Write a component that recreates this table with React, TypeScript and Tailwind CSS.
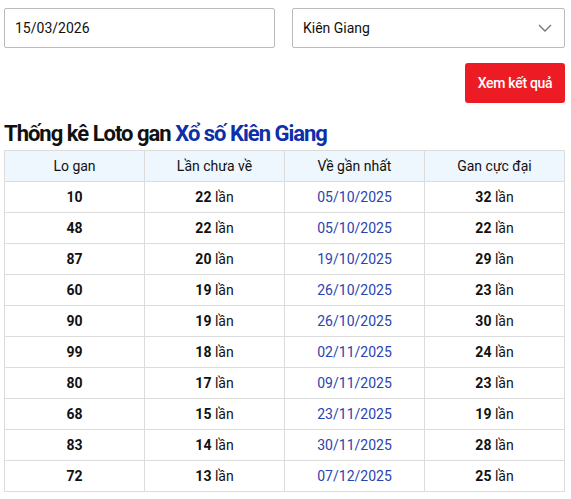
import React from 'react'

function App() {
    const rows = [
        { so: "10", chua: 22, ngay: "05/10/2025", max: 32 },
        { so: "48", chua: 22, ngay: "05/10/2025", max: 22 },
        { so: "87", chua: 20, ngay: "19/10/2025", max: 29 },
        { so: "60", chua: 19, ngay: "26/10/2025", max: 23 },
        { so: "90", chua: 19, ngay: "26/10/2025", max: 30 },
        { so: "99", chua: 18, ngay: "02/11/2025", max: 24 },
        { so: "80", chua: 17, ngay: "09/11/2025", max: 23 },
        { so: "68", chua: 15, ngay: "23/11/2025", max: 19 },
        { so: "83", chua: 14, ngay: "30/11/2025", max: 28 },
        { so: "72", chua: 13, ngay: "07/12/2025", max: 25 }
    ];

    return (
        <div className="bg-white pl-[4px] pr-[6px] pt-[8px] font-['Roboto',sans-serif] text-[#111] w-[571px] h-[499px]">
            {/* Form */}
            <div className="flex gap-[17px]">
                <div className="flex-1 h-[40px] border border-[#bbb] rounded-[2px] flex items-center px-[10px] text-[14px]">
                    15/03/2026
                </div>
                <div className="flex-1 h-[40px] border border-[#bbb] rounded-[2px] flex items-center justify-between pl-[10px] pr-[12px] text-[14px]">
                    <span>Kiên Giang</span>
                    <svg width="14" height="8" viewBox="0 0 14 8" fill="none" stroke="#777" strokeWidth="1.4">
                        <path d="M1 1l6 6 6-6" />
                    </svg>
                </div>
            </div>
            <div className="flex justify-end mt-[15px]">
                <button className="w-[100px] h-[40px] bg-[#ed1c24] text-white text-[14px] font-medium rounded-[3px] tracking-[-0.3px]">
                    Xem kết quả
                </button>
            </div>

            {/* Title */}
            <h2 className="text-[22px] font-bold leading-[26px] mt-[18px] tracking-[-1px]">
                Thống kê Loto gan <span className="text-[#0d2fa8]">Xổ số Kiên Giang</span>
            </h2>

            {/* Table */}
            <table className="w-full mt-[3px] border-collapse text-[14px] table-fixed">
                <thead>
                    <tr className="bg-[#eef6fe]">
                        {["Lo gan", "Lần chưa về", "Về gần nhất", "Gan cực đại"].map((h) => (
                            <th key={h} className="border border-[#dcdcdc] h-[31px] font-normal">{h}</th>
                        ))}
                    </tr>
                </thead>
                <tbody>
                    {rows.map((r) => (
                        <tr key={r.so}>
                            <td className="border border-[#dcdcdc] h-[31px] text-center font-bold">{r.so}</td>
                            <td className="border border-[#dcdcdc] text-center"><b>{r.chua}</b> lần</td>
                            <td className="border border-[#dcdcdc] text-center text-[#2a44b0]">{r.ngay}</td>
                            <td className="border border-[#dcdcdc] text-center"><b>{r.max}</b> lần</td>
                        </tr>
                    ))}
                </tbody>
            </table>
        </div>
    );
}

export default App;
